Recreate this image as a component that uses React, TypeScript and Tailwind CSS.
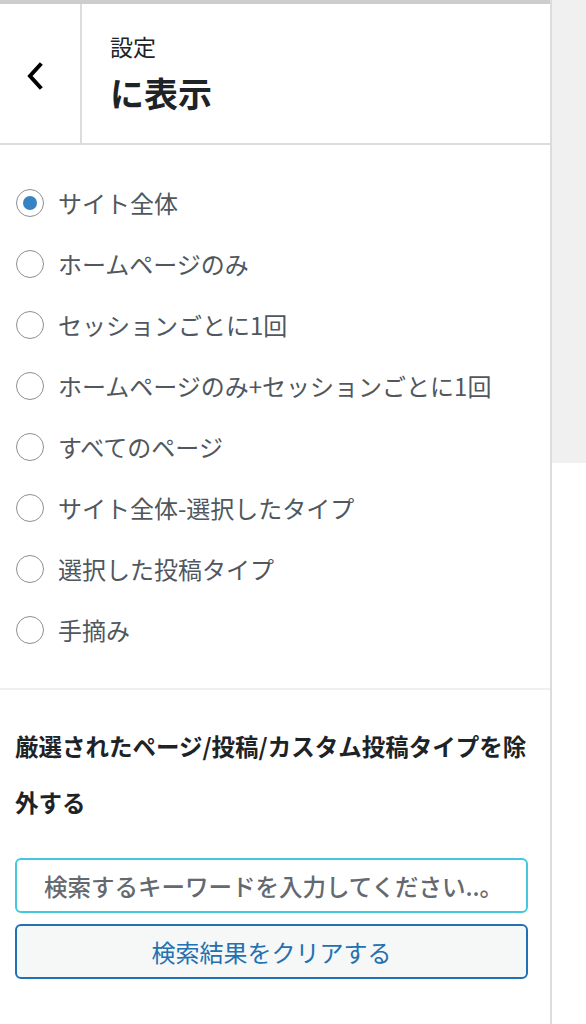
import React, { useState } from 'react';

const options = [
  'サイト全体',
  'ホームページのみ',
  'セッションごとに1回',
  'ホームページのみ+セッションごとに1回',
  'すべてのページ',
  'サイト全体-選択したタイプ',
  '選択した投稿タイプ',
  '手摘み',
];

function Radio({ checked }: { checked: boolean }) {
  return (
    <span className="flex h-[28px] w-[28px] shrink-0 items-center justify-center rounded-full border-[1.5px] border-[#8c8f94] bg-white">
      {checked && <span className="h-[14px] w-[14px] rounded-full bg-[#3582c4]" />}
    </span>
  );
}

export default function App() {
  const [selected, setSelected] = useState(0);

  return (
    <div
      className="flex h-[1024px] w-[586px] overflow-hidden bg-white"
      style={{ fontFamily: '"Noto Sans CJK JP", "Noto Sans", sans-serif' }}
    >
      {/* Panel */}
      <div className="flex w-[552px] shrink-0 flex-col border-r-2 border-[#dcdcde]">
        <div className="h-[4px] bg-[#cdcdd0]" />

        {/* Header */}
        <div className="flex h-[141px] border-b-2 border-[#dcdcde]">
          <button className="flex w-[82px] items-center justify-center border-r-2 border-[#dcdcde] pr-[10px] pt-[4px]">
            <svg width="18" height="28" viewBox="0 0 18 28" fill="none">
              <path d="M14 3 L4 14 L14 25" stroke="#000" strokeWidth="4" strokeLinecap="square" />
            </svg>
          </button>
          <div className="flex flex-col justify-center pl-[28px] pb-[6px]">
            <span className="text-[23px] leading-[30px] text-[#1d2327]">設定</span>
            <span className="mt-[14px] text-[34px] font-bold leading-[36px] text-[#1d2327]">に表示</span>
          </div>
        </div>

        {/* Radio list */}
        <div className="flex flex-col border-b-2 border-[#f0f0f1] pt-[27px] pb-[28px] pl-[16px]">
          {options.map((o, i) => (
            <label
              key={o}
              className="flex h-[61px] cursor-pointer items-center gap-[14px]"
              onClick={() => setSelected(i)}
            >
              <Radio checked={selected === i} />
              <span className="text-[24px] leading-none text-[#50575e]">{o}</span>
            </label>
          ))}
        </div>

        {/* Exclude section */}
        <div className="flex flex-col px-[15px] pt-[28px]">
          <p className="w-[513px] text-[23.5px] font-bold leading-[56px] text-[#1d2327]">
            厳選されたページ/投稿/カスタム投稿タイプを除外する
          </p>
          <input
            className="mt-[28px] h-[55px] w-[513px] rounded-[6px] border-2 border-[#45c8db] bg-white px-[27px] text-[23.5px] font-medium text-[#1d2327] outline-none placeholder:text-[#646970]"
            placeholder="検索するキーワードを入力してください..。"
          />
          <button className="mt-[11px] h-[55px] w-[513px] rounded-[6px] border-2 border-[#2271b1] bg-[#f6f7f7] text-[24px] text-[#2271b1]">
            検索結果をクリアする
          </button>
        </div>
      </div>

      {/* Preview backdrop */}
      <div className="flex flex-1 flex-col">
        <div className="h-[463px] bg-[#f0f0f1]" />
      </div>
    </div>
  );
}
